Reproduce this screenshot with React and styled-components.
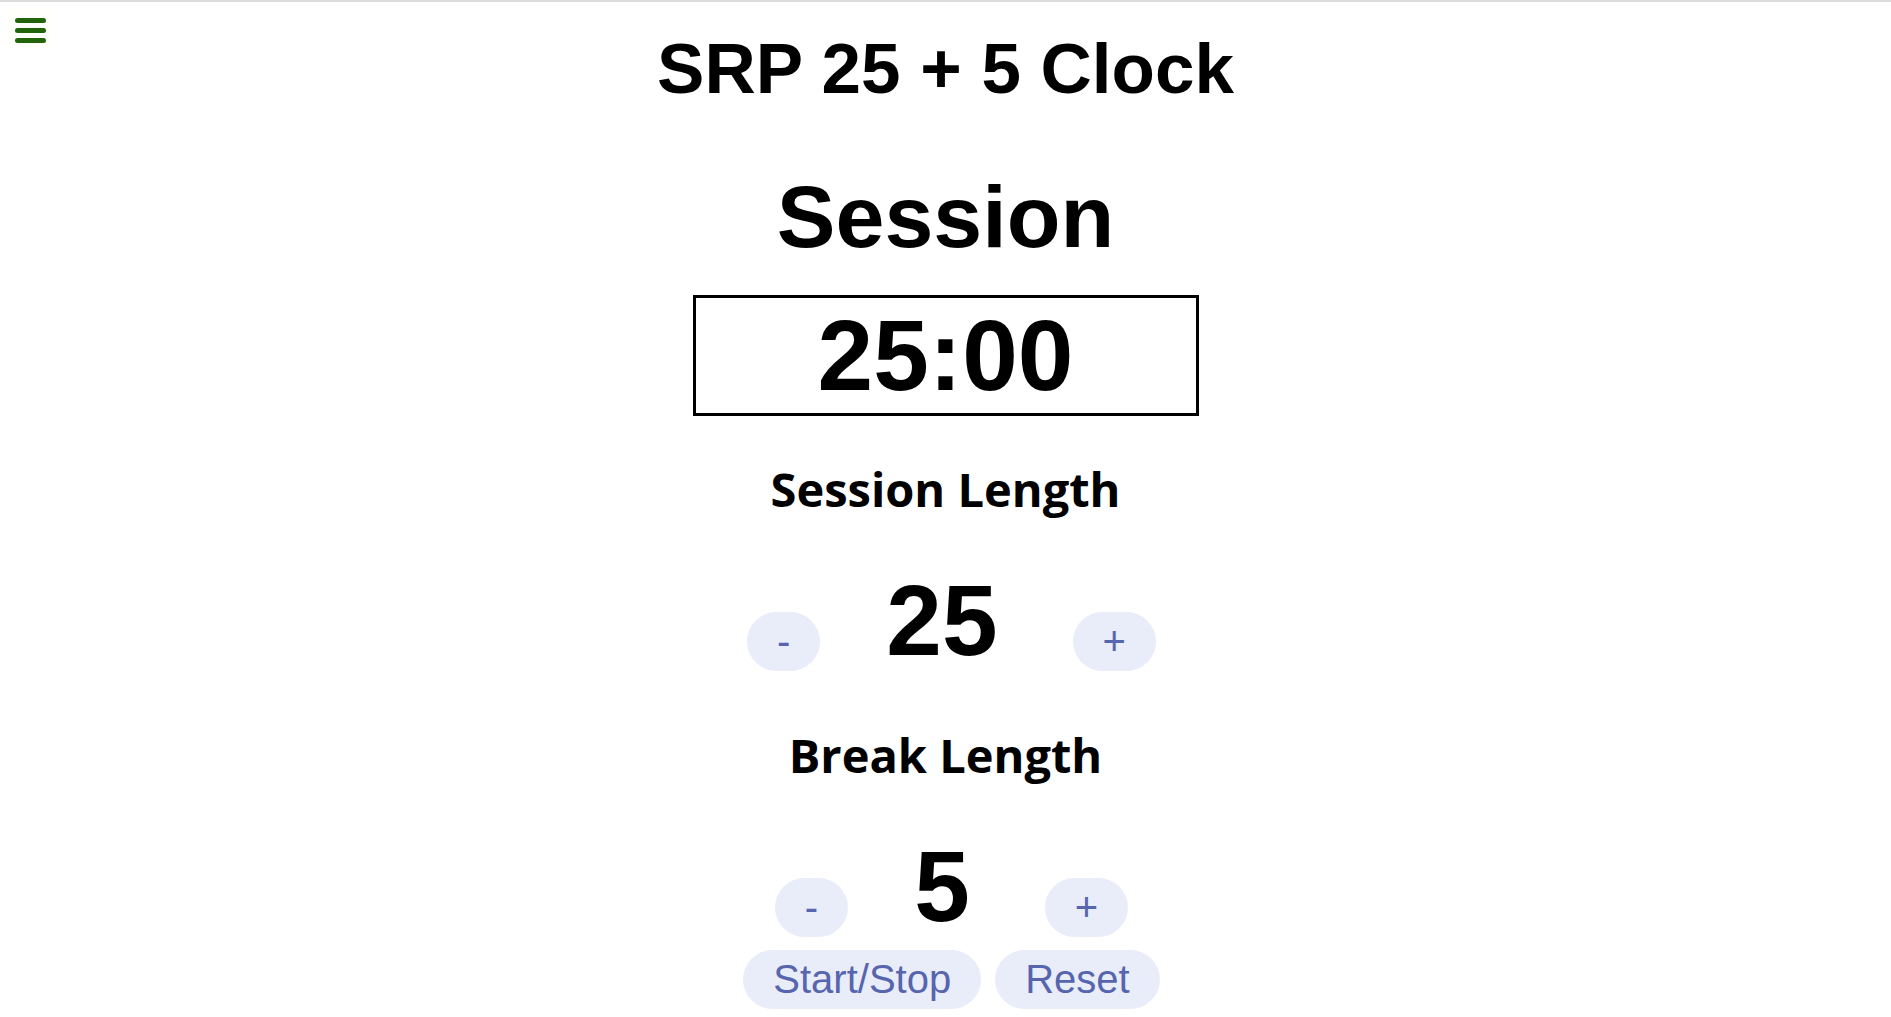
import React, { useState } from "react";
import styled, { createGlobalStyle } from "styled-components";

const GlobalStyle = createGlobalStyle`
  html, body {
    margin: 0;
    padding: 0;
    background: #ffffff;
    overflow: hidden;
  }
  body {
    border-top: 2px solid #dcdcde;
    font-family: "Liberation Sans", Arial, sans-serif;
    color: #000;
  }
`;

const Page = styled.main`
  display: flex;
  flex-direction: column;
  align-items: center;
`;

const MenuToggle = styled.button`
  position: absolute;
  top: 8px;
  left: 5px;
  width: 50px;
  height: 40px;
  padding: 0;
  border: none;
  background: #fffffb;
  display: flex;
  align-items: flex-start;
  justify-content: flex-start;
  cursor: pointer;
`;

const Title = styled.h1`
  margin: 26px 0 0;
  font-family: "Liberation Sans", Arial, sans-serif;
  font-weight: 700;
  font-size: 71px;
  line-height: normal;
`;

const Mode = styled.h2`
  margin: 57px 0 0;
  font-family: "Liberation Sans", Arial, sans-serif;
  font-weight: 700;
  font-size: 88px;
  line-height: normal;
`;

const TimeBox = styled.div`
  margin-top: 27px;
  width: 500px;
  border: 3px solid #000;
  text-align: center;
  font-family: "Liberation Sans", Arial, sans-serif;
  font-weight: 700;
  font-size: 100px;
  line-height: normal;
`;

const Section = styled.section`
  display: flex;
  flex-direction: column;
  align-items: center;
  margin-top: ${(p) => p.$top}px;
`;

const Label = styled.h3`
  margin: 0;
  font-family: "Open Sans", "Noto Sans", sans-serif;
  font-weight: 700;
  font-size: 47px;
  line-height: normal;
`;

const Row = styled.div`
  display: flex;
  align-items: baseline;
  justify-content: center;
  padding-left: 12px;
  margin-top: ${(p) => p.$top || 0}px;
`;

const Value = styled.span`
  margin: 0 75px 0 66px;
  font-family: "Liberation Sans", Arial, sans-serif;
  font-weight: 700;
  font-size: 100px;
  line-height: normal;
`;

const PillButton = styled.button`
  border: none;
  border-radius: 31px;
  padding: 7px 30px;
  background: #e9ecf9;
  color: #5665ad;
  font-family: "Liberation Sans", Arial, sans-serif;
  font-size: 40px;
  font-weight: 400;
  line-height: normal;
  cursor: pointer;
`;

const Controls = styled.div`
  display: flex;
  gap: 14px;
  justify-content: center;
  padding-left: 12px;
  margin-top: 6px;
`;

function Bars() {
  return (
    <svg width="50" height="40" viewBox="0 0 50 40" aria-hidden="true">
      <g stroke="#21640b" strokeWidth="5" strokeLinecap="round">
        <line x1="12.5" y1="12.5" x2="38.5" y2="12.5" />
        <line x1="12.5" y1="22.5" x2="38.5" y2="22.5" />
        <line x1="12.5" y1="32.5" x2="38.5" y2="32.5" />
      </g>
    </svg>
  );
}

function Adjuster({ label, value, onDec, onInc, top }) {
  return (
    <Section $top={top}>
      <Label>{label}</Label>
      <Row $top={42}>
        <PillButton onClick={onDec}>-</PillButton>
        <Value>{value}</Value>
        <PillButton onClick={onInc}>+</PillButton>
      </Row>
    </Section>
  );
}

export default function App() {
  const [session, setSession] = useState(25);
  const [brk, setBrk] = useState(5);
  const clamp = (v) => Math.max(1, Math.min(60, v));
  return (
    <>
      <GlobalStyle />
      <MenuToggle aria-label="menu">
        <Bars />
      </MenuToggle>
      <Page>
        <Title>SRP 25 + 5 Clock</Title>
        <Mode>Session</Mode>
        <TimeBox>{String(session).padStart(2, "0")}:00</TimeBox>
        <Adjuster
          top={41}
          label="Session Length"
          value={session}
          onDec={() => setSession(clamp(session - 1))}
          onInc={() => setSession(clamp(session + 1))}
        />
        <Adjuster
          top={45}
          label="Break Length"
          value={brk}
          onDec={() => setBrk(clamp(brk - 1))}
          onInc={() => setBrk(clamp(brk + 1))}
        />
        <Controls>
          <PillButton>Start/Stop</PillButton>
          <PillButton>Reset</PillButton>
        </Controls>
      </Page>
    </>
  );
}
